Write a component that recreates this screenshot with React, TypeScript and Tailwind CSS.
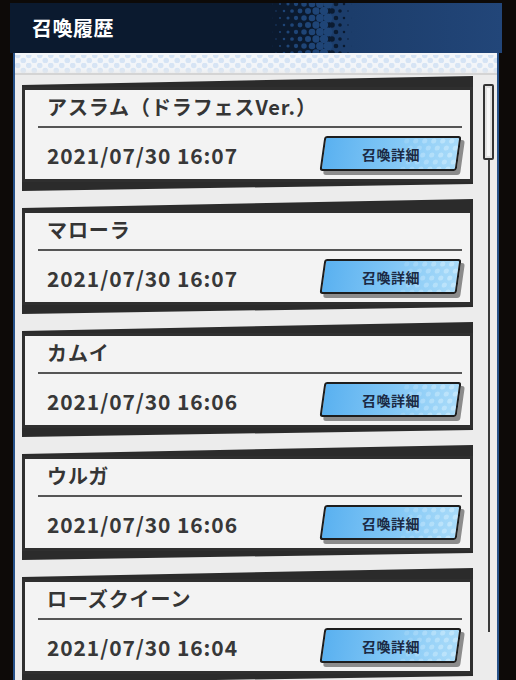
import React from "react";

const items = [
  { name: "アスラム（ドラフェスVer.）", date: "2021/07/30 16:07" },
  { name: "マローラ", date: "2021/07/30 16:07" },
  { name: "カムイ", date: "2021/07/30 16:06" },
  { name: "ウルガ", date: "2021/07/30 16:06" },
  { name: "ローズクイーン", date: "2021/07/30 16:04" },
];

const FONT = { fontFamily: '"Noto Sans CJK JP", "Noto Sans", sans-serif' };

function Halftone() {
  const blue: React.ReactNode[] = [];
  const dark: React.ReactNode[] = [];
  for (let row = 0; row < 8; row++) {
    const y = 1 + row * 7;
    const off = row % 2 ? 4 : 0;
    for (let col = 0; col < 11; col++) {
      const x = col * 8 + off;
      if (x < 60) {
        const r = 0.4 + (x / 60) * 4.4;
        blue.push(<circle key={`b${row}-${col}`} cx={x} cy={y} r={r} fill="#1f4577" />);
      } else {
        const r = Math.max(0.3, 2.8 * (1 - (x - 60) / 22));
        dark.push(<circle key={`d${row}-${col}`} cx={x} cy={y} r={r} fill="#0b1b31" />);
      }
    }
  }
  return (
    <svg width="80" height="50" viewBox="0 0 80 50" className="shrink-0 block">
      <rect x="0" y="0" width="80" height="50" fill="#0b1a2f" />
      <rect x="58" y="0" width="22" height="50" fill="#1c3d6b" />
      {blue}
      {dark}
    </svg>
  );
}

function DotBand() {
  return (
    <svg width="100%" height="22" className="block">
      <defs>
        <pattern id="band" width="11" height="10" patternUnits="userSpaceOnUse">
          <circle cx="2.75" cy="2.5" r="2.8" fill="#d2e2f5" />
          <circle cx="8.25" cy="7.5" r="2.8" fill="#d2e2f5" />
        </pattern>
        <linearGradient id="fade" x1="0" y1="0" x2="0" y2="1">
          <stop offset="0" stopColor="#eef2f8" stopOpacity="0" />
          <stop offset="0.7" stopColor="#eeeeee" stopOpacity="0.2" />
          <stop offset="1" stopColor="#e6e6e6" stopOpacity="0.9" />
        </linearGradient>
      </defs>
      <rect x="0" y="0" width="100%" height="22" fill="#f3f6fa" />
      <rect x="0" y="2" width="100%" height="20" fill="url(#band)" />
      <rect x="0" y="0" width="100%" height="22" fill="url(#fade)" />
      <rect x="0" y="20" width="100%" height="2" fill="#d4d4d4" />
    </svg>
  );
}

function DetailButton() {
  return (
    <div className="relative h-[35px] w-[137px] skew-x-[-8deg] rounded-[3px] border-2 border-[#1d1d1d] bg-linear-to-r from-[#5ab1f0] via-[#80c6f5] to-[#a9dbf9] shadow-[4px_4px_0_#8c8c8c] overflow-hidden flex items-center justify-center">
      <svg width="60" height="35" viewBox="0 0 60 35" className="absolute right-0 top-0">
        {[0, 1, 2, 3, 4].map((r) =>
          [0, 1, 2, 3, 4, 5].map((c) => (
            <circle
              key={`${r}-${c}`}
              cx={8 + c * 9 + (r % 2 ? 4.5 : 0)}
              cy={3 + r * 7}
              r={2.6}
              fill="#c9e9fc"
              opacity={0.25 + c * 0.1}
            />
          ))
        )}
      </svg>
      <span
        className="relative skew-x-[8deg] text-[14px] leading-[16px] font-bold text-[#1b2a44] tracking-[0.5px]"
        style={FONT}
      >
        召喚詳細
      </span>
    </div>
  );
}

function Card({ name, date }: { name: string; date: string }) {
  return (
    <div className="h-[117px] shrink-0 pt-[11px] bg-[#2b2b2b] [clip-path:polygon(0_9px,100%_0,100%_calc(100%_-_9px),0_calc(100%_-_2px))]">
      <div className="h-[95px] border-[3px] border-[#2f2f2f] bg-[#f3f3f3] flex flex-col">
        <div
          className="pl-[22px] pt-[5px] text-[20px] leading-[24px] font-bold text-[#353535] whitespace-nowrap tracking-[0.9px]"
          style={FONT}
        >
          {name}
        </div>
        <div className="ml-[13px] mr-[8px] mt-[7px] h-[2px] bg-[#555555]" />
        <div className="mt-[8px] flex items-center justify-between pl-[22px] pr-[11px]">
          <span
            className="mt-[2px] text-[21px] leading-[24px] font-bold text-[#383838] tracking-[0.9px] whitespace-nowrap"
            style={FONT}
          >
            {date}
          </span>
          <DetailButton />
        </div>
      </div>
    </div>
  );
}

export default function App() {
  return (
    <div className="h-[680px] w-[516px] overflow-hidden bg-[#0d0a08]">
      <div className="ml-[10px] w-[492px] pt-[3px] flex flex-col">
        {/* Header */}
        <div className="h-[50px] flex">
          <div className="flex-1 bg-[#0b1a2f] flex items-center pl-[22px]">
            <span className="text-[20px] font-bold text-white tracking-[0.5px]" style={FONT}>
              召喚履歴
            </span>
          </div>
          <Halftone />
          <div className="w-[150px] bg-linear-to-r from-[#1c3d6b] to-[#224679]" />
        </div>
        {/* Body */}
        <div className="mx-[3px] border-x-2 border-[#27528a] bg-[#ececec] h-[640px]">
          <DotBand />
          <div className="flex pt-[1px]">
            <div className="pl-[7px] w-[458px] flex flex-col gap-[6px]">
              {items.map((it) => (
                <Card key={it.name} name={it.name} date={it.date} />
              ))}
            </div>
            <div className="ml-[10px] w-[11px] flex flex-col items-center pt-[8px]">
              <div className="h-[76px] w-[11px] rounded-[2px] border-2 border-[#333333] bg-[#e2e2e2] flex justify-center">
                <div className="mt-[2px] h-[68px] w-[3px] bg-[#f8f8f8]" />
              </div>
              <div className="h-[472px] w-[2px] bg-[#3a3a3a]" />
            </div>
          </div>
        </div>
      </div>
    </div>
  );
}
